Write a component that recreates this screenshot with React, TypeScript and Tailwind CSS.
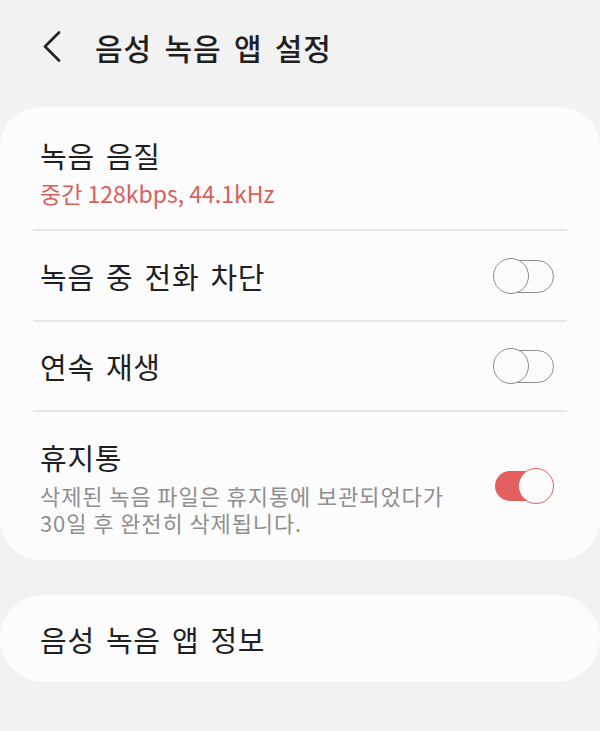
import React from "react"

const font = { fontFamily: '"Noto Sans CJK KR", "Noto Sans", Roboto, sans-serif' }

// row title text
const title = "text-[29px] leading-[38px] tracking-[0.7px] [word-spacing:4px]"

function Toggle({ on }: { on: boolean }) {
  if (on) {
    return (
      <div className="relative h-[36px] w-[61px] shrink-0">
        <div className="absolute left-[2px] right-[4px] top-[3px] h-[30px] rounded-full bg-[#e35f5f]" />
        <div className="absolute right-0 top-0 h-[36px] w-[36px] rounded-full border-[1.5px] border-[#e35f5f] bg-[#fbfbfb]" />
      </div>
    )
  }
  return (
    <div className="relative h-[36px] w-[61px] shrink-0">
      <div className="absolute left-[2px] right-0 top-[2px] h-[33px] rounded-full border-[1.5px] border-[#8c8c8c] bg-[#fbfbfb]" />
      <div className="absolute left-0 top-0 h-[36px] w-[36px] rounded-full border-[1.5px] border-[#8c8c8c] bg-[#fbfbfb]" />
    </div>
  )
}

function Divider() {
  return <div className="mx-[33px] h-[2px] bg-[#e6e6e6]" />
}

export default function App() {
  return (
    <div className="min-h-[731px] w-[600px] bg-[#f2f2f2] text-[#1f1f1f]" style={font}>
      {/* header */}
      <div className="flex h-[107px] items-center pb-[14px] pl-[43px]">
        <svg width="18" height="31" viewBox="0 0 18 31" fill="none" className="shrink-0">
          <polyline points="16,1.5 2,15.5 16,29.5" stroke="#222" strokeWidth="2.6" strokeLinecap="round" strokeLinejoin="round" />
        </svg>
        <h1 className="ml-[34px] text-[30px] font-medium leading-none tracking-[1px] [word-spacing:4.5px]">음성 녹음 앱 설정</h1>
      </div>

      {/* settings card */}
      <div className="rounded-[40px] bg-[#fcfcfc]">
        <div className="flex h-[122px] flex-col justify-center px-[40px] pt-[7px]">
          <div className={title}>녹음 음질</div>
          <div className="mt-[5px] text-[23px] leading-[28px] text-[#d8605c]">중간 128kbps, 44.1kHz</div>
        </div>
        <Divider />
        <div className="flex h-[89px] items-center justify-between pl-[40px] pr-[46px]">
          <div className={title}>녹음 중 전화 차단</div>
          <Toggle on={false} />
        </div>
        <Divider />
        <div className="flex h-[88px] items-center justify-between pl-[40px] pr-[46px]">
          <div className={title}>연속 재생</div>
          <Toggle on={false} />
        </div>
        <Divider />
        <div className="flex h-[148px] items-center justify-between pl-[40px] pr-[46px]">
          <div className="flex flex-col">
            <div className="text-[29px] leading-[40px] tracking-[0.7px]">휴지통</div>
            <div className="mt-[5px] text-[22px] leading-[27px] tracking-[0.9px] text-[#8f8f8f]">
              <div>삭제된 녹음 파일은 휴지통에 보관되었다가</div>
              <div>30일 후 완전히 삭제됩니다.</div>
            </div>
          </div>
          <Toggle on={true} />
        </div>
      </div>

      {/* about card */}
      <div className="mt-[35px] flex h-[87px] items-center rounded-[44px] bg-[#fcfcfc] px-[40px]">
        <div className={title}>음성 녹음 앱 정보</div>
      </div>
    </div>
  )
}
